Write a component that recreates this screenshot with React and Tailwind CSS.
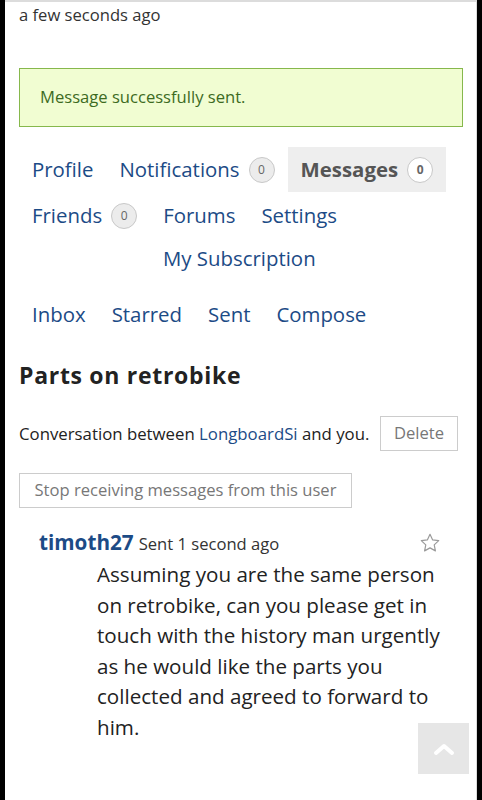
import React from "react";

const font = { fontFamily: '"Open Sans", "Noto Sans", sans-serif' };

function Badge({ value, active }) {
  return (
    <span
      className={
        "ml-[9px] inline-flex h-[26px] w-[26px] items-center justify-center rounded-full border border-[#c8c8c8] text-[12px] text-[#666] " +
        (active ? "bg-white" : "bg-[#ececec]")
      }
    >
      {value}
    </span>
  );
}

function NavItem({ label, badge, active }) {
  return (
    <div
      className={
        "flex h-[45px] items-center px-[13px] text-[20.4px] " +
        (active ? "bg-[#eeeeee] font-bold text-[#555]" : "text-[#1c4b86]")
      }
    >
      <span>{label}</span>
      {badge !== undefined && <Badge value={badge} active={active} />}
    </div>
  );
}

function StarIcon() {
  return (
    <svg width="22" height="22" viewBox="0 0 24 24" fill="none" stroke="#9a9a9a" strokeWidth="1.3" strokeLinejoin="round">
      <path d="M12 2.5l2.9 6.1 6.6.8-4.9 4.6 1.3 6.6L12 17.3l-5.9 3.3 1.3-6.6-4.9-4.6 6.6-.8z" />
    </svg>
  );
}

export default function App() {
  return (
    <div className="min-h-[800px] bg-black px-[5px]" style={font}>
      <div className="min-h-[800px] border-t-2 border-r border-[#dcdcdc] bg-white pr-[13px] pl-[14px] text-[#333]">
        <div className="pt-[1px] text-[16.6px] leading-[24px] text-[#333]">a few seconds ago</div>

        <div className="mt-[41px] flex h-[59px] items-center border border-[#86b84c] bg-[#f1fdd2] px-[20px] text-[16.6px] text-[#3d6b1f]">
          Message successfully sent.
        </div>

        <div className="mt-[20px]">
          <div className="flex">
            <NavItem label="Profile" />
            <NavItem label="Notifications" badge={0} />
            <NavItem label="Messages" badge={0} active />
          </div>
          <div className="mt-px flex">
            <NavItem label="Friends" badge={0} />
            <NavItem label="Forums" />
            <NavItem label="Settings" />
          </div>
          <div className="-mt-[2px] flex pl-[131px]">
            <NavItem label="My Subscription" />
          </div>
        </div>

        <div className="mt-[11px] flex">
          <NavItem label="Inbox" />
          <NavItem label="Starred" />
          <NavItem label="Sent" />
          <NavItem label="Compose" />
        </div>

        <h1 className="mt-[23px] text-[23px] font-bold leading-[30px] tracking-[0.7px] text-[#222]">
          Parts on retrobike
        </h1>

        <div className="mt-[26px] flex items-center justify-between">
          <div className="text-[16.8px] text-[#222]">
            Conversation between <span className="text-[#1c4b86]">LongboardSi</span> and you.
          </div>
          <div className="mr-[5px] flex h-[35px] w-[78px] items-center justify-center border border-[#cccccc] text-[16.6px] text-[#777]">
            Delete
          </div>
        </div>

        <div className="mt-[22px] flex h-[35px] w-[333px] items-center justify-center border border-[#cccccc] text-[16.6px] text-[#777]">
          Stop receiving messages from this user
        </div>

        <div className="mt-[19px] flex items-center justify-between pl-[20px] pr-[22px]">
          <div className="flex items-baseline">
            <span className="text-[20.7px] font-bold text-[#1c4b86]">timoth27</span>
            <span className="ml-[5px] text-[16.6px] text-[#333]">Sent 1 second ago</span>
          </div>
          <StarIcon />
        </div>

        <p className="mt-[1px] pl-[78px] pr-[20px] text-[20.6px] leading-[30.5px] text-[#222]">
          Assuming you are the same person on retrobike, can you please get in touch with the history man urgently as he would like the parts you collected and agreed to forward to him.
        </p>
      </div>

      <div className="fixed right-[13px] bottom-[26px] flex h-[51px] w-[51px] items-center justify-center bg-[#e6e6e6]">
        <svg width="22" height="14" viewBox="0 0 22 14" fill="none" stroke="white" strokeWidth="4" strokeLinecap="round" strokeLinejoin="round">
          <path d="M3 11l8-7 8 7" />
        </svg>
      </div>
    </div>
  );
}
